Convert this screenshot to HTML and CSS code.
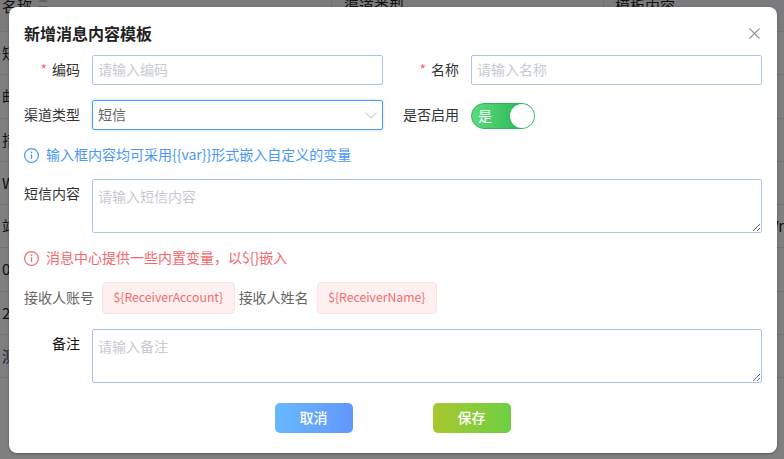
FILE: index.html
```html
<!DOCTYPE html>
<html lang="zh-CN">
<head>
<meta charset="utf-8">
<title>新增消息内容模板</title>
<link rel="stylesheet" href="styles.css">
</head>
<body>
<div class="table">
  <div class="thead">
    <div class="cell c1">名称<svg class="caret" width="10" height="14" viewBox="0 0 10 14"><path d="M5 0l5 5H0zM5 14l5-5H0z" fill="#c0c4cc"/></svg></div>
    <div class="cell c2 sep">渠道类型</div>
    <div class="cell c3 sep">模板内容</div>
  </div>
  <div class="row"><div class="cell c1">短信模板</div></div>
  <div class="row"><div class="cell c1">邮件模板</div></div>
  <div class="row"><div class="cell c1">措施通知</div></div>
  <div class="row"><div class="cell c1">Web通知</div></div>
  <div class="row"><div class="cell c1">站内信</div><div class="cell c2"></div><div class="cell c3 end">内容模板/Vr</div></div>
  <div class="row"><div class="cell c1">0123</div></div>
  <div class="row"><div class="cell c1">2023</div></div>
  <div class="row"><div class="cell c1 link">测试</div></div>
</div>
<div class="overlay">
  <section class="dialog">
    <header class="head">
      <h2 class="title">新增消息内容模板</h2>
      <svg class="close" width="11" height="11" viewBox="0 0 11 11"><path d="M.5.5l10 10M10.5.5l-10 10" stroke="#909399" stroke-width="1.1" fill="none"/></svg>
    </header>
    <div class="form">
      <div class="line">
        <div class="field"><label class="label"><span class="req">*</span>编码</label><input class="ctl" placeholder="请输入编码"></div>
        <div class="field"><label class="label"><span class="req">*</span>名称</label><input class="ctl" placeholder="请输入名称"></div>
      </div>
      <div class="line">
        <div class="field"><label class="label">渠道类型</label>
          <div class="ctl select"><span>短信</span><svg width="12" height="7" viewBox="0 0 12 7"><path d="M.6.6L6 6l5.4-5.4" stroke="#c6d1e4" stroke-width="1.1" fill="none"/></svg></div>
        </div>
        <div class="field"><label class="label">是否启用</label>
          <div class="switch"><span>是</span><i class="knob"></i></div>
        </div>
      </div>
      <p class="note info"><svg width="15" height="15" viewBox="0 0 15 15"><circle cx="7.5" cy="7.5" r="6.9" fill="none" stroke="currentColor" stroke-width="1.2"/><path d="M7.5 6.4v4.6" stroke="currentColor" stroke-width="1.3"/><circle cx="7.5" cy="4.4" r=".8" fill="currentColor"/></svg>输入框内容均可采用{{var}}形式嵌入自定义的变量</p>
      <div class="field full"><label class="label">短信内容</label><textarea class="ctl area" placeholder="请输入短信内容"></textarea></div>
      <p class="note warn"><svg width="15" height="15" viewBox="0 0 15 15"><circle cx="7.5" cy="7.5" r="6.9" fill="none" stroke="currentColor" stroke-width="1.2"/><path d="M7.5 6.4v4.6" stroke="currentColor" stroke-width="1.3"/><circle cx="7.5" cy="4.4" r=".8" fill="currentColor"/></svg>消息中心提供一些内置变量，以${}嵌入</p>
      <div class="vars">
        <span class="var-name">接收人账号</span><span class="tag">${ReceiverAccount}</span>
        <span class="var-name">接收人姓名</span><span class="tag">${ReceiverName}</span>
      </div>
      <div class="field full"><label class="label dark">备注</label><textarea class="ctl area" placeholder="请输入备注"></textarea></div>
      <div class="actions">
        <button class="btn cancel">取消</button>
        <button class="btn save">保存</button>
      </div>
    </div>
  </section>
</div>
</body>
</html>
```
FILE: styles.css
```css
* { box-sizing: border-box; }
html, body { margin: 0; height: 459px; overflow: hidden; }
body { position: relative; background: #fff; font: 14px/20px "Noto Sans CJK SC", "Liberation Sans", sans-serif; color: #333; }

.table { margin-top: -12px; }
.thead, .row { display: flex; height: 43.25px; border-bottom: 1px solid #e4e7ed; align-items: center; }
.thead { background: #f6f6fb; height: 44px; padding-bottom: 8px; font-size: 15px; }
.thead .cell { height: 36px; line-height: 36px; }
.cell { white-space: nowrap; padding-left: 2px; color: #222; font-size: 15px; }
.c1 { width: 331px; display: flex; align-items: center; }
.c2 { width: 272px; padding-left: 12px; }
.c3 { width: 181px; padding-left: 11px; }
.link { color: #1d3f8f; }
.sep { border-left: 1px solid #dfe2e8; }
.end { text-align: right; direction: rtl; padding-left: 0; padding-right: 0; }
.caret { margin-left: 6px; margin-top: -4px; }

.overlay { position: absolute; inset: 0; padding: 7px 7px 6px 9px; display: flex; background: rgba(0, 0, 0, .5); }
.dialog { flex: 1; background: #fff; border-radius: 8px; box-shadow: 0 1px 3px rgba(0, 0, 0, .3); padding: 15px 15px 0; }

.head { display: flex; justify-content: space-between; align-items: center; height: 22px; margin-bottom: 11px; padding-right: 2px; }
.title { margin: 0; font-size: 16px; line-height: 22px; font-weight: 600; color: #222; }

.form { display: flex; flex-direction: column; }
.line { display: flex; gap: 20px; margin-bottom: 15px; }
.field { display: flex; flex: 0 0 359px; align-items: flex-start; }
.full { flex: none; }
.label { flex: 0 0 56px; margin-right: 12px; line-height: 28px; text-align: right; white-space: nowrap; color: #333; }
.dark { color: #111; }
.req { color: #f56c6c; margin-right: 5px; }

.ctl { flex: 1; width: 291px; height: 30px; padding: 0 5px 2px; border: 1px solid #adc3ec; border-radius: 2px; font: inherit; color: #666; background: #fff; outline: 0; min-width: 0; }
.ctl::placeholder { color: #c8cad1; }
.select { display: flex; align-items: center; justify-content: space-between; padding-right: 5px; border-color: #46a0fb; box-shadow: 0 0 3px rgba(64, 158, 255, .35); }
.select svg { margin-top: 2px; }
.area { flex: none; width: 670px; height: 54px; padding-top: 6px; line-height: 20px; display: block; }

.switch { width: 64px; height: 26px; margin-top: 3px; border: 1px solid #2fb45f; border-radius: 13px; background: linear-gradient(90deg, #5cdc7c, #1fae50); display: flex; align-items: center; justify-content: space-between; padding-left: 6px; color: #fff; }
.switch span { margin-top: -2px; }
.knob { width: 24px; height: 24px; border-radius: 50%; background: #fff; }

.note { display: flex; align-items: center; gap: 7px; margin: -1px 0 15px; height: 20px; font-size: 14px; line-height: 20px; white-space: nowrap; }
.note svg { flex: none; margin-top: 2px; }
.info { color: #4a98f4; }
.warn { color: #f4676b; margin-top: 14px; }

.vars { display: flex; align-items: center; margin-bottom: 15px; color: #666; }
.var-name { width: 78px; white-space: nowrap; margin-top: -2px; }
.tag { height: 32px; line-height: 29px; padding: 0 10.5px; margin-right: 4px; border: 1px solid #fde2e2; border-radius: 4px; background: #fef0f0; color: #f56c6c; font-size: 12.25px; white-space: nowrap; }

.actions { display: flex; justify-content: center; gap: 80px; margin-top: 20px; padding-right: 1px; }
.btn { width: 78px; height: 30px; padding: 0 0 2px; border: 0; border-radius: 5px; color: #fff; font: inherit; font-weight: 500; }
.cancel { background: linear-gradient(90deg, #67b8ff, #6297fb); }
.save { background: linear-gradient(90deg, #a9c72f, #6ecf43); }
```
